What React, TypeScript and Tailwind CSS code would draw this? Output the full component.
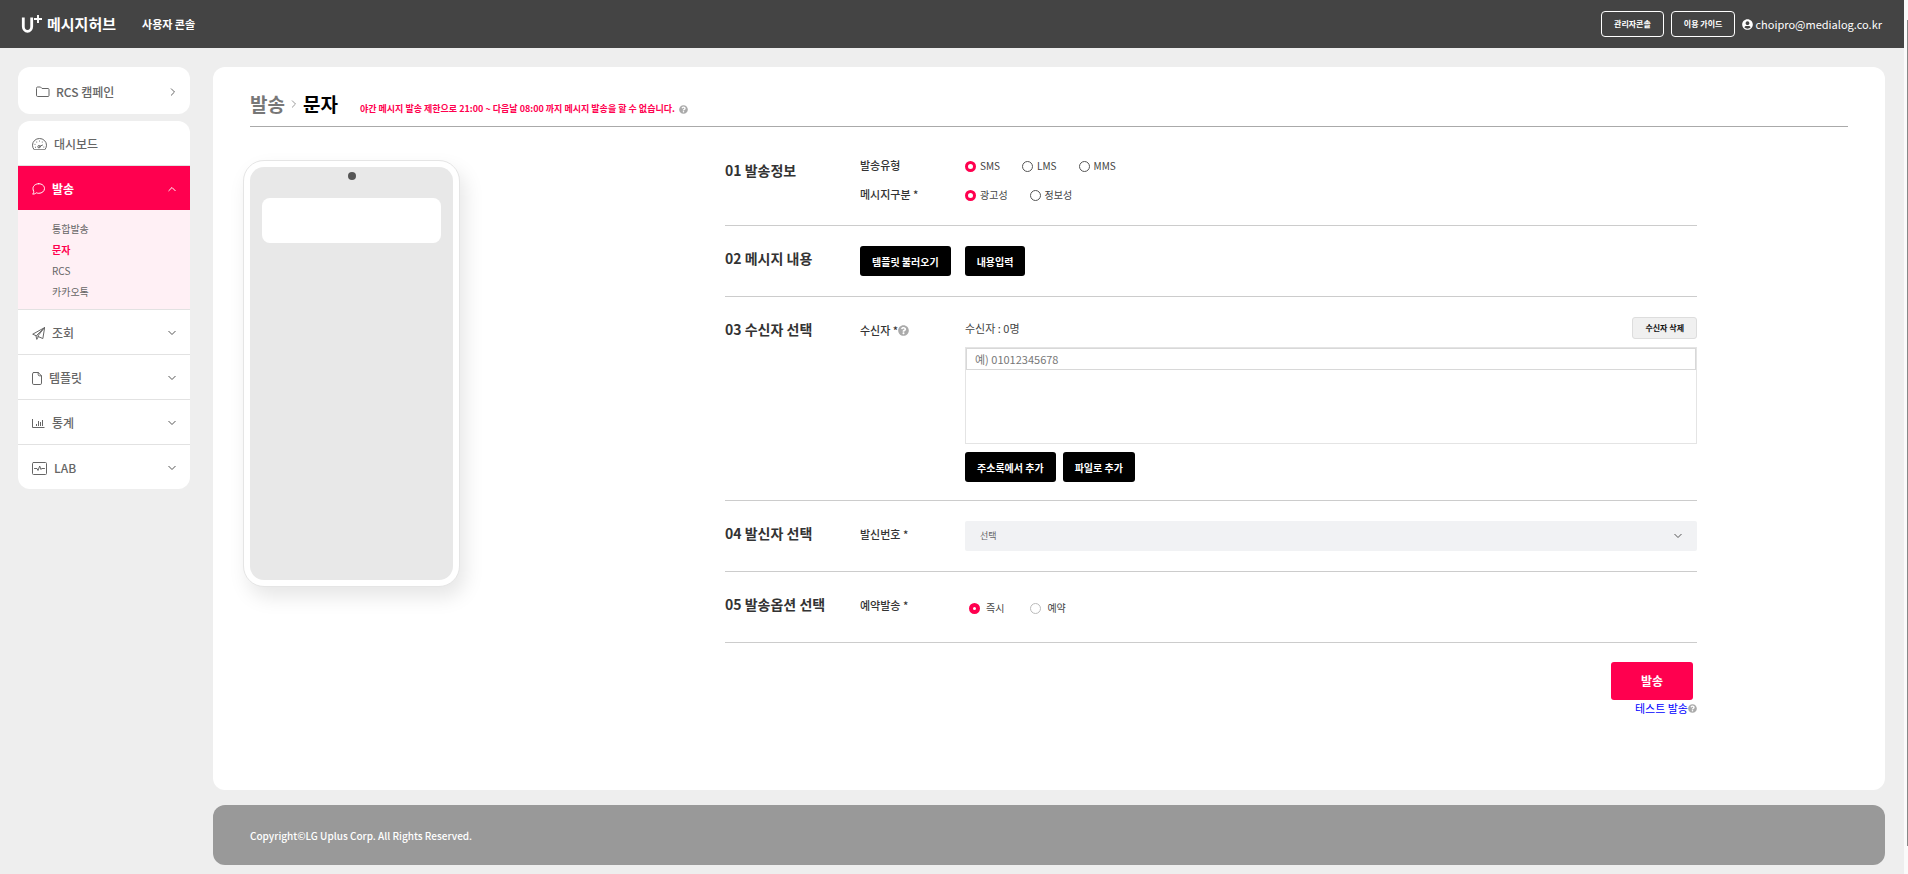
import { useState } from "react";
import type { ReactNode } from "react";
import { FaQuestionCircle, FaUserCircle } from "react-icons/fa";

const line = {
  fill: "none",
  stroke: "currentColor",
  strokeWidth: 1,
  strokeLinecap: "round",
  strokeLinejoin: "round",
} as const;

function FolderIcon() {
  return (
    <svg width="14" height="12" viewBox="0 0 14 12" {...line} aria-hidden="true">
      <path d="M.5 2q0-1 1-1h3l1.500 1.500h6q1 0 1 1v6q0 1-1 1h-10.500q-1 0-1-1z" />
    </svg>
  );
}

function DashboardIcon() {
  return (
    <svg width="15" height="12" viewBox="0 0 15 12" {...line} aria-hidden="true">
      <path d="M2 11.500q-1.500-1.700-1.500-4.300a7 6.700 0 0 1 14 0q0 2.600-1.500 4.300z" />
      <circle cx="7" cy="8.700" r="1.200" />
      <path d="M8.200 8.100l2.300-1M7.500 3v.1M4.700 4v.1M10.300 4v.1M3 6.300v.1M3.500 9.200v.1M11.800 9v.1" />
    </svg>
  );
}

function ChatIcon() {
  return (
    <svg width="13" height="12" viewBox="0 0 13 12" {...line} aria-hidden="true">
      <path d="M6.800.7c3.200 0 5.700 2.100 5.700 4.800s-2.500 4.800-5.700 4.800c-.9 0-1.800-.2-2.500-.5-.9.900-2.200 1.400-3.700 1.300.9-.8 1.300-1.800 1.100-2.800-.5-.8-.7-1.700-.7-2.800 0-2.700 2.600-4.800 5.800-4.800z" />
    </svg>
  );
}

function PlaneIcon() {
  return (
    <svg width="13" height="13" viewBox="0 0 13 13" {...line} aria-hidden="true">
      <path d="M12.400.7L.7 7.200l3.200 1.400zM12.400.7L5.600 9.300l4.900 2.100zM3.900 8.600l.9 3.800 1.500-2.700" />
    </svg>
  );
}

function FileIcon() {
  return (
    <svg width="10" height="13" viewBox="0 0 10 13" {...line} aria-hidden="true">
      <path d="M1.800.5h4.400l3.300 3.300v7.400q0 1.300-1.300 1.300h-6.400q-1.300 0-1.300-1.300v-9.400q0-1.300 1.300-1.300zM6.200.5v2.100q0 1.200 1.200 1.200h2.100" />
    </svg>
  );
}

function ChartIcon() {
  return (
    <svg width="13" height="11" viewBox="0 0 13 11" {...line} strokeLinecap="butt" aria-hidden="true">
      <path d="M.5 1v8.500h12M4.500 8v-2M6.500 8v-5M8.500 8v-4M10.500 8v-6" />
    </svg>
  );
}

function PulseIcon() {
  return (
    <svg width="15" height="13" viewBox="0 0 15 13" {...line} aria-hidden="true">
      <rect x=".5" y=".5" width="14" height="12" rx="1" />
      <path d="M2.500 6.500h2.500l1 2 1.700-4.500 1.300 3.500.6-1h2.900" />
    </svg>
  );
}

function Chevron({ className }: { className: string }) {
  return (
    <svg width="8" height="8" viewBox="0 0 8 8" {...line} className={className} aria-hidden="true">
      <path d="M.8 2.300l3.200 3.200 3.200-3.200" />
    </svg>
  );
}

function Help({ label, className }: { label: string; className: string }) {
  return (
    <button type="button" aria-label={label} className="text-[#aaa]">
      <FaQuestionCircle className={className} />
    </button>
  );
}

function MenuItem({ icon, label }: { icon: ReactNode; label: string }) {
  return (
    <a href="#" className="flex h-[45px] items-center gap-[7px] border-t border-[#e2e2e2] px-[14px] pt-[2px] text-xs font-medium text-[#666]">
      {icon}
      <span className="flex-1">{label}</span>
      <Chevron className="text-[#555]" />
    </a>
  );
}

function Radio({
  name,
  label,
  checked,
  onChange,
  ring,
}: {
  name: string;
  label: string;
  checked: boolean;
  onChange: () => void;
  ring: string;
}) {
  return (
    <label className="flex items-center gap-1 text-[10px] leading-4 text-[#444]">
      <input
        type="radio"
        name={name}
        checked={checked}
        onChange={onChange}
        className={`size-[11px] appearance-none rounded-full border bg-white ${ring}`}
      />
      {label}
    </label>
  );
}

function Choice({ name, options, gap, ring }: { name: string; options: string[]; gap: string; ring: string }) {
  const [value, setValue] = useState(options[0]);
  return (
    <div className={`flex ${gap}`}>
      {options.map((o) => (
        <Radio key={o} name={name} label={o} checked={value === o} onChange={() => setValue(o)} ring={ring} />
      ))}
    </div>
  );
}

function BlackButton({ children }: { children: ReactNode }) {
  return (
    <button type="button" className="h-[30px] rounded-[3px] bg-black px-3 text-[10px] font-bold text-white">
      {children}
    </button>
  );
}

function Section({ title, children }: { title: string; children: ReactNode }) {
  return (
    <section className="flex border-b border-[#ccc] py-5">
      <h2 className="w-[135px] shrink-0 pt-[2px] text-sm leading-5 font-bold text-[#333]">{title}</h2>
      {children}
    </section>
  );
}

const label = "w-[105px] shrink-0 text-[11px] leading-[14px] font-medium text-[#333]";

export default function App() {
  return (
    <div className="flex min-h-screen bg-[#eee] font-['Noto_Sans_CJK_KR',sans-serif]">
      <div className="flex min-w-0 flex-1 flex-col">
        <header className="flex h-12 items-center bg-[#444] pr-[22px] pl-[21px] text-white">
          <a href="#" className="flex items-center gap-[5px]">
            <svg width="21" height="20" viewBox="0 0 21 20" fill="none" stroke="currentColor" aria-hidden="true">
              <path d="M2.300 3.500v9a4.200 4.800 0 0 0 8.400 0v-9" strokeWidth="2.800" />
              <path d="M17 1v8M13 5h8" strokeWidth="1.900" />
            </svg>
            <span className="text-[15px] leading-5 font-bold">메시지허브</span>
          </a>
          <a href="#" className="ml-[26px] text-[11px] font-bold">
            사용자 콘솔
          </a>
          <div className="ml-auto flex items-center gap-[7px]">
            <button type="button" className="h-[26px] rounded-[4px] border border-white px-3 text-[8px] font-bold">
              관리자콘솔
            </button>
            <button type="button" className="h-[26px] rounded-[4px] border border-white px-3 text-[8px] font-bold">
              이용 가이드
            </button>
            <a href="#" className="flex items-center gap-[2px] text-[11px]">
              <FaUserCircle className="size-[11px]" />
              choipro@medialog.co.kr
            </a>
          </div>
        </header>

        <div className="flex flex-1 gap-[23px] pt-[19px] pr-[19px] pb-[9px] pl-[18px]">
          <nav className="flex w-[172px] shrink-0 flex-col gap-[7px]">
            <a href="#" className="flex h-[47px] items-center gap-[6px] rounded-xl bg-white pt-[2px] pr-[13px] pl-[18px] text-xs font-medium text-[#666]">
              <FolderIcon />
              <span className="flex-1">RCS 캠페인</span>
              <Chevron className="-rotate-90" />
            </a>
            <div className="overflow-hidden rounded-xl bg-white">
              <a href="#" className="flex h-[45px] items-center gap-[7px] border-b border-[#e2e2e2] px-[14px] pt-[2px] text-xs font-medium text-[#666]">
                <DashboardIcon />
                대시보드
              </a>
              <a href="#" className="flex h-11 items-center gap-[7px] bg-[#ff004f] px-[14px] pt-[2px] text-xs font-bold text-white">
                <ChatIcon />
                <span className="flex-1">발송</span>
                <Chevron className="rotate-180" />
              </a>
              <ul className="h-[99px] bg-[#fff0f5] pt-2 pl-[34px] text-[10px] leading-[21px] text-[#666]">
                <li><a href="#">통합발송</a></li>
                <li><a href="#" className="font-bold text-[#ff004f]">문자</a></li>
                <li><a href="#">RCS</a></li>
                <li><a href="#">카카오톡</a></li>
              </ul>
              <MenuItem icon={<PlaneIcon />} label="조회" />
              <MenuItem icon={<FileIcon />} label="템플릿" />
              <MenuItem icon={<ChartIcon />} label="통계" />
              <MenuItem icon={<PulseIcon />} label="LAB" />
            </div>
          </nav>

          <div className="flex min-w-0 flex-1 flex-col gap-[15px]">
            <main className="flex-1 rounded-xl bg-white px-[37px] pt-[22px]">
              <div className="flex h-[38px] items-start border-b border-[#aaa]">
                <h1 className="flex items-center gap-[5px] text-[19px] leading-[30px] font-bold text-black">
                  <span className="text-[#777]">발송</span>
                  <Chevron className="-rotate-90 text-[#999]" />
                  문자
                </h1>
                <p className="mt-3 ml-[22px] flex items-center gap-1 text-[9px] leading-4 font-bold text-[#ff004f]">
                  야간 메시지 발송 제한으로 21:00 ~ 다음날 08:00 까지 메시지 발송을 할 수 없습니다.
                  <Help label="야간 발송 제한 도움말" className="size-[9px]" />
                </p>
              </div>

              <div className="flex">
                <div className="w-[475px] shrink-0 pt-[33px]">
                  <div className="-ml-[7px] w-[217px] rounded-[21px] border border-[#e5e5e5] bg-white p-[6px] shadow-[5px_10px_20px_rgba(0,0,0,0.1)]">
                    <div className="flex h-[413px] flex-col items-center rounded-[14px] bg-[#e8e8e8] px-3 pt-[5px]">
                      <div className="size-2 rounded-full bg-[#555]" />
                      <div className="mt-[18px] h-[45px] w-full rounded-lg bg-white" />
                    </div>
                  </div>
                </div>

                <form className="mr-[151px] min-w-0 flex-1 pt-[11px]" onSubmit={(e) => e.preventDefault()}>
                  <Section title="01 발송정보">
                    <div className="flex flex-1 flex-col gap-[13px] pb-[2px]">
                      <div className="flex">
                        <span className={label}>발송유형</span>
                        <Choice name="type" options={["SMS", "LMS", "MMS"]} gap="gap-[22px]" ring="border-[#555] checked:border-[3px] checked:border-[#ff004f]" />
                      </div>
                      <div className="flex">
                        <span className={label}>메시지구분 *</span>
                        <Choice name="kind" options={["광고성", "정보성"]} gap="gap-[22px]" ring="border-[#555] checked:border-[3px] checked:border-[#ff004f]" />
                      </div>
                    </div>
                  </Section>

                  <Section title="02 메시지 내용">
                    <div className="flex gap-[14px]">
                      <BlackButton>템플릿 불러오기</BlackButton>
                      <BlackButton>내용입력</BlackButton>
                    </div>
                  </Section>

                  <Section title="03 수신자 선택">
                    <div className={`${label} flex items-start pt-[6px]`}>
                      <label htmlFor="receiver">수신자 *</label>
                      <Help label="수신자 도움말" className="mt-[2px] size-[11px]" />
                    </div>
                    <div className="-mb-[2px] min-w-0 flex-1">
                      <div className="flex items-center justify-between text-[11px] text-[#444]">
                        수신자 : 0명
                        <button type="button" className="h-[22px] rounded-[3px] border border-[#ddd] bg-[#f0f0f0] px-3 text-[8px] font-bold text-[#111]">
                          수신자 삭제
                        </button>
                      </div>
                      <div className="mt-2 h-[97px] border border-[#e4e4e4]">
                        <input
                          id="receiver"
                          placeholder="예) 01012345678"
                          className="block h-[22px] w-full border border-[#d8d8d8] px-2 text-[11px] text-[#333] placeholder:text-[#777]"
                        />
                      </div>
                      <div className="mt-2 flex gap-[7px]">
                        <BlackButton>주소록에서 추가</BlackButton>
                        <BlackButton>파일로 추가</BlackButton>
                      </div>
                    </div>
                  </Section>

                  <Section title="04 발신자 선택">
                    <label htmlFor="sender" className={`${label} pt-[6px]`}>발신번호 *</label>
                    <div className="relative flex-1">
                      <select id="sender" className="block h-[30px] w-full appearance-none rounded-[2px] bg-[#f1f2f4] px-[15px] text-[9px] text-[#666]">
                        <option>선택</option>
                      </select>
                      <Chevron className="pointer-events-none absolute top-[11px] right-[15px] text-[#555]" />
                    </div>
                  </Section>

                  <Section title="05 발송옵션 선택">
                    <span className={`${label} pt-[6px]`}>예약발송 *</span>
                    <div className="h-[30px] pt-2 pl-1">
                      <Choice name="reserve" options={["즉시", "예약"]} gap="gap-[26px]" ring="mr-[2px] border-[#bbb] checked:border-4 checked:border-[#ff004f]" />
                    </div>
                  </Section>

                  <div className="flex flex-col items-end pt-[19px]">
                    <button type="submit" className="mr-1 h-[38px] w-[82px] rounded-[3px] bg-[#ff004f] text-xs font-bold text-white">
                      발송
                    </button>
                    <div className="flex items-center">
                      <a href="#" className="text-[11px] leading-4 text-[#0000ff]">테스트 발송</a>
                      <Help label="테스트 발송 도움말" className="size-[9px]" />
                    </div>
                  </div>
                </form>
              </div>
            </main>

            <footer className="flex h-[60px] items-center rounded-xl bg-[#999] px-[37px] text-[10px] font-medium text-white">
              Copyright©LG Uplus Corp. All Rights Reserved.
            </footer>
          </div>
        </div>
      </div>
      <div className="w-1 shrink-0 bg-[#fafafa] pt-5 pb-7 pl-[3px]">
        <div className="h-full w-px bg-[#888]" />
      </div>
    </div>
  );
}
